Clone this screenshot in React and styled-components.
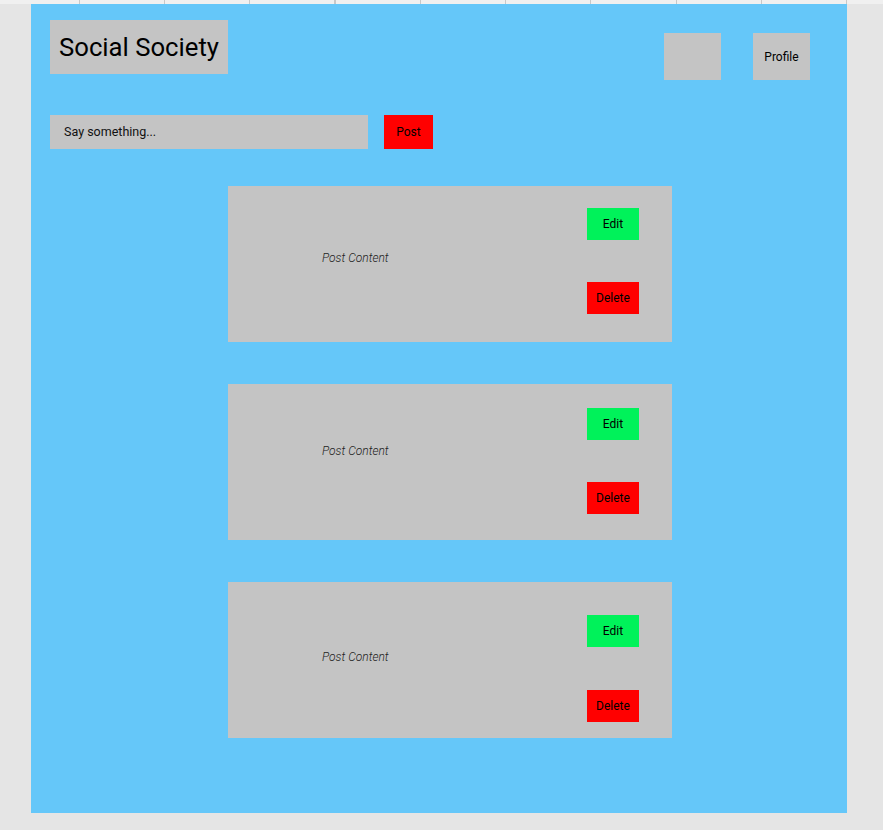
import React from "react";
import styled, { createGlobalStyle } from "styled-components";

const GlobalStyle = createGlobalStyle`
  body {
    margin: 0;
    background-color: #e5e5e5;
    font-family: Roboto, "Liberation Sans", sans-serif;
  }
`;

const Ruler = styled.div`
  height: 4px;
  background-color: #f0f0f0;
  background-image: repeating-linear-gradient(
    to right,
    transparent 0,
    transparent 78.6px,
    #c8c8c8 78.6px,
    #c8c8c8 79.6px,
    transparent 79.6px,
    transparent 85.3px
  );
`;

const Frame = styled.main`
  margin-left: 31px;
  width: 816px;
  height: 809px;
  box-sizing: border-box;
  background-color: #65c7f9;
  padding: 16px 37px 0 19px;
`;

const Header = styled.header`
  display: flex;
  align-items: flex-start;
`;

const Title = styled.h1`
  margin: 0;
  width: 178px;
  height: 54px;
  box-sizing: border-box;
  padding-left: 9px;
  background-color: #c4c4c4;
  font-size: 25.7px;
  font-weight: 400;
  line-height: 54px;
  color: #000;
`;

const HeaderActions = styled.div`
  margin-left: auto;
  margin-top: 13px;
  display: flex;
  gap: 32px;
`;

const GreyButton = styled.button`
  width: 57px;
  height: 47px;
  border: none;
  padding: 0;
  background-color: #c4c4c4;
  font-family: inherit;
  font-size: 12px;
  color: #000;
`;

const Composer = styled.form`
  margin-top: 35px;
  display: flex;
  gap: 16px;
`;

const Input = styled.div`
  width: 318px;
  height: 34px;
  box-sizing: border-box;
  padding-left: 14px;
  background-color: #c4c4c4;
  font-size: 12.5px;
  line-height: 34px;
  color: #111;
`;

const ActionButton = styled.button`
  width: ${(p) => p.$width}px;
  height: ${(p) => p.$height}px;
  border: none;
  padding: 0;
  background-color: ${(p) => p.$color};
  font-family: inherit;
  font-size: 12px;
  color: #000;
`;

const Feed = styled.section`
  margin-top: 37px;
  margin-left: 178px;
  display: flex;
  flex-direction: column;
  gap: 42px;
`;

const Card = styled.article`
  width: 444px;
  height: 156px;
  box-sizing: border-box;
  background-color: #c4c4c4;
  display: flex;
  padding: ${(p) => p.$top}px 33px 0 94px;
`;

const Content = styled.p`
  margin: ${(p) => p.$textTop}px 0 0;
  height: 14px;
  font-size: 12px;
  line-height: 14px;
  font-style: italic;
  font-weight: 300;
  color: #222;
`;

const CardActions = styled.div`
  margin-left: auto;
  display: flex;
  flex-direction: column;
  gap: ${(p) => p.$gap}px;
`;

const posts = [
  { top: 22, gap: 42, textTop: 43 },
  { top: 24, gap: 42, textTop: 36 },
  { top: 33, gap: 43, textTop: 35 },
];

export default function App() {
  return (
    <>
      <GlobalStyle />
      <Ruler />
      <Frame>
        <Header>
          <Title>Social Society</Title>
          <HeaderActions>
            <GreyButton />
            <GreyButton>Profile</GreyButton>
          </HeaderActions>
        </Header>
        <Composer>
          <Input>Say something...</Input>
          <ActionButton type="button" $width={49} $height={34} $color="#ff0000">
            Post
          </ActionButton>
        </Composer>
        <Feed>
          {posts.map((p, i) => (
            <Card key={i} $top={p.top}>
              <Content $textTop={p.textTop}>Post Content</Content>
              <CardActions $gap={p.gap}>
                <ActionButton $width={52} $height={32} $color="#00f25a">
                  Edit
                </ActionButton>
                <ActionButton $width={52} $height={32} $color="#ff0000">
                  Delete
                </ActionButton>
              </CardActions>
            </Card>
          ))}
        </Feed>
      </Frame>
    </>
  );
}
